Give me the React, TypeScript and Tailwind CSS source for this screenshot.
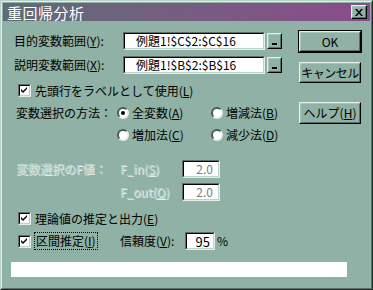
import React from 'react';

const font = "font-['Noto_Sans_CJK_JP','Noto_Sans',sans-serif]";

function Field({ className = '', children }: { className?: string; children?: React.ReactNode }) {
  return (
    <div className={`border border-t-[#5b7068] border-l-[#5b7068] border-r-[#e4eeea] border-b-[#e4eeea] ${className}`}>
      <div className="h-full border border-t-black border-l-black border-r-[#bcd2ca] border-b-[#bcd2ca] bg-white flex items-center overflow-hidden">
        {children}
      </div>
    </div>
  );
}

function Raised({ className = '', children }: { className?: string; children?: React.ReactNode }) {
  return (
    <div className={`border border-t-[#e8f0ec] border-l-[#e8f0ec] border-r-black border-b-black ${className}`}>
      <div className="h-full border border-t-[#a8c4ba] border-l-[#a8c4ba] border-r-[#5b7068] border-b-[#5b7068] flex items-center justify-center whitespace-nowrap">
        {children}
      </div>
    </div>
  );
}

function Check() {
  return (
    <div className="w-[13px] h-[13px] border border-t-[#5b7068] border-l-[#5b7068] border-r-[#e4eeea] border-b-[#e4eeea] shrink-0">
      <div className="w-full h-full border border-t-black border-l-black border-r-[#bcd2ca] border-b-[#bcd2ca] bg-white flex items-center justify-center">
        <svg width="7" height="7" viewBox="0 0 7 7">
          <path d="M0 2 L2 4 L6 0 L6 2 L2 6 L0 4 Z" fill="black" />
        </svg>
      </div>
    </div>
  );
}

function Radio({ on }: { on?: boolean }) {
  return (
    <div className="w-[12px] h-[12px] rounded-full border-2 border-t-[#4a5e56] border-l-[#4a5e56] border-r-[#e8f0ec] border-b-[#e8f0ec] bg-white flex items-center justify-center shrink-0">
      {on && <div className="w-[4px] h-[4px] rounded-full bg-black" />}
    </div>
  );
}

const dis = 'text-[#bcd1c9] [text-shadow:1px_1px_0_#e4eeea]';

export default function App() {
  return (
    <div className={`${font} text-[12px] leading-none text-black w-[373px] h-[290px] bg-[#8fb1a6] border border-t-[#b9cfc7] border-l-[#b9cfc7] border-r-[#1e2a26] border-b-[#1e2a26] relative overflow-hidden`}>
      <div className="h-full border border-t-[#e6efeb] border-l-[#e6efeb] border-r-[#5b7068] border-b-[#5b7068] flex flex-col">
        <div className="mx-[1px] mt-[1px] h-[18px] bg-gradient-to-r from-[#5c6c76] to-[#8a4b8b] flex items-center justify-between pl-[4px] pr-[3px]">
          <span className="text-white text-[15px] tracking-[0.5px]">重回帰分析</span>
          <Raised className="w-[16px] h-[14px] bg-[#8fb1a6]">
            <svg width="8" height="7" viewBox="0 0 8 7">
              <path d="M0 0 H2 L4 2.5 L6 0 H8 L5 3.5 L8 7 H6 L4 4.5 L2 7 H0 L3 3.5 Z" fill="black" />
            </svg>
          </Raised>
        </div>

        <div className="flex">
          <div className="w-[294px] pl-[12px] pt-[11px]">
            <div className="flex items-center h-[18px]">
              <span className="w-[109px]">目的変数範囲(<u>Y</u>):</span>
              <Field className="w-[142px] h-[18px]"><span className="pl-[11px]">例題1!$C$2:$C$16</span></Field>
              <Raised className="ml-[2px] w-[15px] h-[16px]"><div className="w-[5px] h-[2px] bg-black mt-[5px]" /></Raised>
            </div>
            <div className="flex items-center h-[18px] mt-[6px]">
              <span className="w-[109px]">説明変数範囲(<u>X</u>):</span>
              <Field className="w-[142px] h-[18px]"><span className="pl-[11px]">例題1!$B$2:$B$16</span></Field>
              <Raised className="ml-[2px] w-[15px] h-[16px]"><div className="w-[5px] h-[2px] bg-black mt-[5px]" /></Raised>
            </div>
            <div className="flex items-center h-[13px] mt-[10px] pl-[4px]">
              <Check />
              <span className="ml-[4px]">先頭行をラベルとして使用(<u>L</u>)</span>
            </div>
            <div className="flex items-center h-[16px] mt-[8px] pl-[2px]">
              <span className="w-[101px]">変数選択の方法：</span>
              <Radio on />
              <span className="ml-[3px] w-[79px]">全変数(<u>A</u>)</span>
              <Radio />
              <span className="ml-[3px]">増減法(<u>B</u>)</span>
            </div>
            <div className="flex items-center h-[16px] mt-[6px] pl-[103px]">
              <Radio />
              <span className="ml-[3px] w-[79px]">増加法(<u>C</u>)</span>
              <Radio />
              <span className="ml-[3px]">減少法(<u>D</u>)</span>
            </div>
            <div className="flex items-center h-[18px] mt-[17px] pl-[2px]">
              <span className={`w-[104px] ${dis}`}>変数選択のF値：</span>
              <span className={`w-[62px] ${dis}`}>F_in(<u>S</u>)</span>
              <Field className="w-[38px] h-[18px]"><span className="w-full text-right pr-[5px] text-[#6f827b]">2.0</span></Field>
            </div>
            <div className="flex items-center h-[18px] mt-[5px] pl-[106px]">
              <span className={`w-[62px] ${dis}`}>F_out(<u>O</u>)</span>
              <Field className="w-[38px] h-[18px]"><span className="w-full text-right pr-[5px] text-[#6f827b]">2.0</span></Field>
            </div>
            <div className="flex items-center h-[13px] mt-[11px] pl-[4px]">
              <Check />
              <span className="ml-[4px]">理論値の推定と出力(<u>E</u>)</span>
            </div>
            <div className="flex items-center h-[18px] mt-[7px] pl-[4px]">
              <Check />
              <span className="ml-[3px] w-[86px]">
                <span className="border border-dotted border-black px-[1px] py-[2px] inline-block">区間推定(<u>I</u>)</span>
              </span>
              <span className="w-[65px]">信頼度(<u>V</u>):</span>
              <Field className="w-[30px] h-[18px]"><span className="w-full text-right pr-[3px] text-[13px]">95</span></Field>
              <span className="ml-[2px]">%</span>
            </div>
          </div>

          <div className="pl-[2px] pt-[9px] flex flex-col">
            <div className="border border-black w-[64px] h-[23px]">
              <Raised className="w-full h-full"><span>OK</span></Raised>
            </div>
            <Raised className="mt-[9px] ml-[1px] w-[62px] h-[21px]"><span className="tracking-[-0.5px]">キャンセル</span></Raised>
            <Raised className="mt-[19px] ml-[1px] w-[62px] h-[22px]"><span>ヘルプ(<u>H</u>)</span></Raised>
          </div>
        </div>

        <div className="ml-[9px] mt-[12px] w-[336px] h-[15px] bg-white" />
      </div>
    </div>
  );
}
